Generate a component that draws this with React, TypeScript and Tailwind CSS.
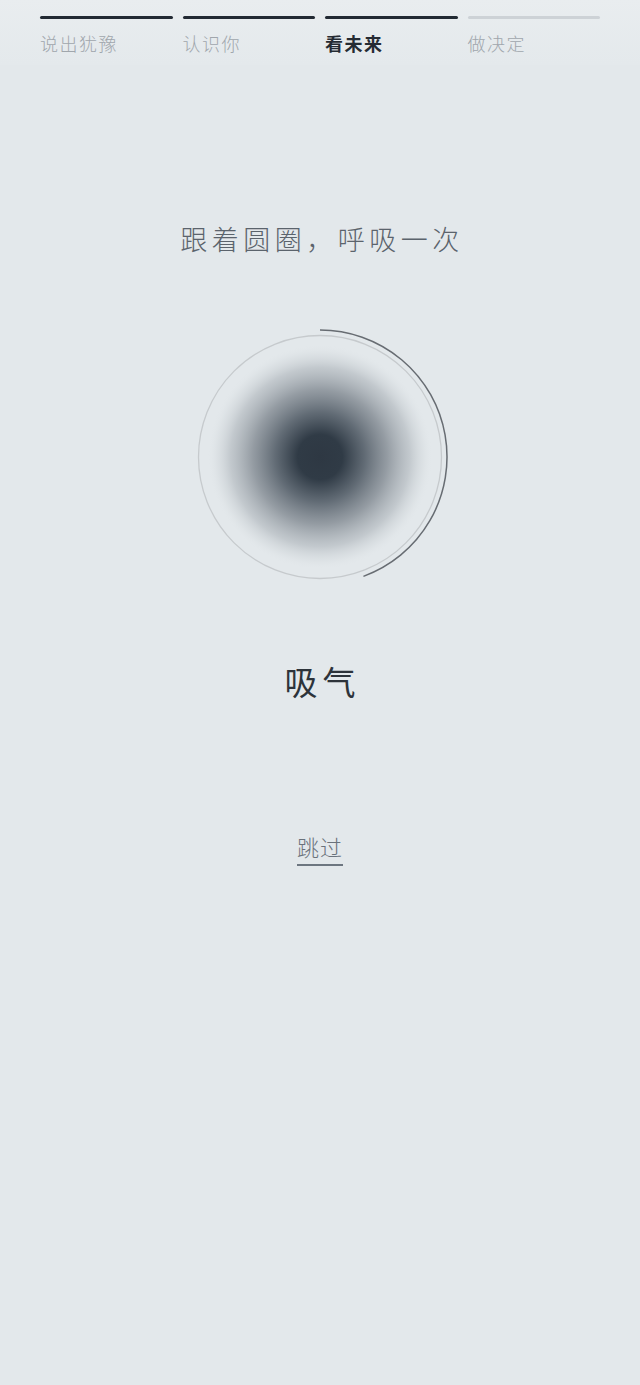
import React from "react";

const steps = [
  { label: "说出犹豫", done: true, active: false },
  { label: "认识你", done: true, active: false },
  { label: "看未来", done: true, active: true },
  { label: "做决定", done: false, active: false },
];

function Breath() {
  const cx = 130;
  const cy = 130;
  const r = 127;
  const end = (160 * Math.PI) / 180;
  const ex = cx + r * Math.sin(end);
  const ey = cy - r * Math.cos(end);
  return (
    <svg width="260" height="260" viewBox="0 0 260 260">
      <defs>
        <radialGradient id="blob" cx="0.5" cy="0.5" r="0.5">
          <stop offset="0" stopColor="#2e3843" stopOpacity="1" />
          <stop offset="0.2" stopColor="#303b46" stopOpacity="1" />
          <stop offset="0.4" stopColor="#5b656f" stopOpacity="0.95" />
          <stop offset="0.6" stopColor="#838b93" stopOpacity="0.82" />
          <stop offset="0.8" stopColor="#abb2b8" stopOpacity="0.58" />
          <stop offset="0.92" stopColor="#cbd1d5" stopOpacity="0.3" />
          <stop offset="1" stopColor="#dfe4e7" stopOpacity="0" />
        </radialGradient>
      </defs>
      <circle cx={cx} cy={cy} r="112" fill="url(#blob)" />
      <circle cx={cx} cy={cy} r="121.5" fill="none" stroke="#c6cacd" strokeWidth="1.3" />
      <path
        d={`M ${cx} ${cy - r} A ${r} ${r} 0 0 1 ${ex.toFixed(2)} ${ey.toFixed(2)}`}
        fill="none"
        stroke="#676c72"
        strokeWidth="1.5"
      />
    </svg>
  );
}

export default function App() {
  return (
    <div
      className="min-h-[1385px] w-full bg-[#e3e8eb] flex flex-col items-center"
      style={{ fontFamily: '"Noto Sans CJK SC", "Noto Sans", sans-serif' }}
    >
      <div className="w-full h-[65px] px-10 pt-4 bg-gradient-to-b from-[#e9edef] to-[#e4e9ec]">
        <div className="grid grid-cols-4 gap-[10px]">
          {steps.map((s) => (
            <div key={s.label} className="flex flex-col">
              <div className={`h-[3px] rounded-full ${s.done ? "bg-[#222a33]" : "bg-[#cdd2d6]"}`} />
              <div
                className={`mt-[12px] text-[18px] leading-[24px] tracking-[1.5px] ${
                  s.active ? "text-[#252b33] font-semibold" : "text-[#a0a6ac] font-light"
                }`}
              >
                {s.label}
              </div>
            </div>
          ))}
        </div>
      </div>

      <div className="mt-[158px] text-[27px] leading-[32px] tracking-[4.5px] pl-[4px] text-[#5b636c] font-light">
        跟着圆圈，呼吸一次
      </div>

      <div className="mt-[72px]">
        <Breath />
      </div>

      <div className="mt-[72px] text-[33px] leading-[44px] tracking-[5px] pl-[5px] text-[#2d333a]">
        吸气
      </div>

      <div className="mt-[130px] text-[22px] leading-[26px] tracking-[1px] text-[#6a727b] font-light border-b-2 border-[#6d7680] pb-[5px]">
        跳过
      </div>
    </div>
  );
}
